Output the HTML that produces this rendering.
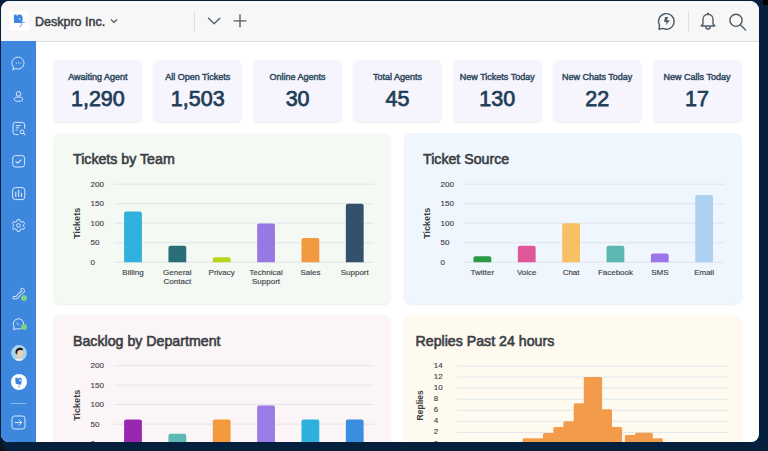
<!DOCTYPE html><html><head><meta charset="utf-8"><style>
html,body{margin:0;padding:0;width:768px;height:451px;overflow:hidden;background:#05203d;font-family:"Liberation Sans", sans-serif;}
.win{position:absolute;left:0;top:0;width:768px;height:451px;background:#fff;clip-path:inset(1px 9px 9px 1px round 8.5px 9px 7.5px 8px);}
.a{position:absolute;}
.stat{position:absolute;top:60px;width:89px;height:62px;background:#f6f4fd;border-radius:6px;box-shadow:0 1px 1.5px rgba(0,0,0,0.08);}
.stat .l{position:absolute;left:0;right:0;top:11.6px;text-align:center;font-size:9px;font-weight:400;color:#2f4a5e;-webkit-text-stroke:0.45px #2f4a5e;white-space:nowrap;}
.stat .n{position:absolute;left:0;right:0;top:26.7px;text-align:center;font-size:21.5px;font-weight:400;color:#1f3e58;-webkit-text-stroke:0.75px #1f3e58;white-space:nowrap;}
.card{position:absolute;border-radius:7px;box-shadow:0 1px 2px rgba(0,0,0,0.07);}
.title{position:absolute;font-size:14.2px;font-weight:400;color:#3b3e44;-webkit-text-stroke:0.6px #3b3e44;white-space:nowrap;}
svg text{font-family:"Liberation Sans", sans-serif;}
svg text.t{stroke:#45484d;stroke-width:0.15px;}
</style></head><body>
<div class="a" style="left:763px;top:0;width:5px;height:4.5px;background:#000;"></div>
<svg class="a" style="left:0;top:440px" width="8" height="11"><path d="M0 0 L1.5 2 L6 11 H0 Z" fill="#111418"/></svg>
<div class="win">

<div class="a" style="left:0;top:0;width:768px;height:42px;background:#f7f7f8;border-bottom:1px solid #dcdfe2;box-sizing:border-box;"></div>
<div class="a" style="left:9px;top:11px;width:19.5px;height:19.5px;background:#fff;border-radius:3px;"></div>
<svg class="a" style="left:0;top:0" width="40" height="40" viewBox="0 0 40 40">
<path d="M13.9 15.4 A0.8 0.8 0 0 1 14.7 14.6 H16.6 V15.6 H18 V14.6 H19.6 A3 3 0 0 1 22.6 17.6 V19.9 A3 3 0 0 1 19.6 22.9 H15.4 A1.5 1.5 0 0 1 13.9 21.4 Z" fill="#3d88de"/>
<circle cx="19.7" cy="18.8" r="0.9" fill="#b9d6f5"/>
<path d="M21.3 22.4 V24.8 C21.3 25.9 20.4 26.8 19.3 26.8 M21.3 22.5 H24.8" stroke="#3d88de" stroke-width="0.8" fill="none"/>
</svg>
<div class="a" style="left:35px;top:14.6px;font-size:12.5px;font-weight:400;color:#3a3e45;-webkit-text-stroke:0.5px #3a3e45;white-space:nowrap;">Deskpro Inc.</div>
<svg class="a" style="left:109px;top:17px" width="10" height="8" viewBox="0 0 10 8"><path d="M2 2.5 L5 5.5 L8 2.5" stroke="#4b5563" stroke-width="1.2" fill="none"/></svg>
<div class="a" style="left:194px;top:11px;width:1px;height:21px;background:#dcdee1;"></div>
<svg class="a" style="left:0;top:0" width="768" height="42" viewBox="0 0 768 42">
<path d="M208.6 18.2 L214.2 23.8 L219.8 18.2" stroke="#55606b" stroke-width="1.4" fill="none" stroke-linecap="round" stroke-linejoin="round"/>
<path d="M240 15 V26.8 M234.1 20.9 H245.9" stroke="#55606b" stroke-width="1.4" fill="none" stroke-linecap="round"/>
<path d="M659.6 25.4 A7.8 7.8 0 1 1 662.8 28.4 L659 29.2 Z" stroke="#4f5d69" stroke-width="1.4" fill="none" stroke-linejoin="round"/>
<path d="M665 17 H668.2 L666.9 20.2 H670 L665.6 25.6 L666.6 21.9 H664 Z" fill="#4f5d69"/>
<rect x="688" y="11" width="1" height="20.5" fill="#dfe1e4"/>
<path d="M708 14.3 C705 14.3 703 16.6 703 19.6 V24 L701.2 26 H714.8 L713 24 V19.6 C713 16.6 711 14.3 708 14.3 Z" stroke="#4f5d69" stroke-width="1.4" fill="none" stroke-linejoin="round"/>
<path d="M705.8 26.4 A2.2 2.6 0 0 0 710.2 26.4" stroke="#4f5d69" stroke-width="1.4" fill="none"/>
<path d="M708 13.2 V14.6" stroke="#4f5d69" stroke-width="1.6" stroke-linecap="round"/>
<circle cx="736" cy="20.3" r="6.1" stroke="#4f5d69" stroke-width="1.4" fill="none"/>
<path d="M740.6 25 L745.6 30" stroke="#4f5d69" stroke-width="1.4" stroke-linecap="round"/>
</svg>
<div class="a" style="left:0;top:41px;width:36px;height:410px;background:#3d88de;"></div>
<svg class="a" style="left:10px;top:55.0px" width="17" height="17" viewBox="0 0 17 17"><path d="M3.6 12.2 L2.6 14.8 L5.6 13.6 A6 6 0 1 0 3.6 12.2 Z" stroke="#dce9f8" stroke-width="1" fill="none" stroke-linejoin="round"/><circle cx="6.4" cy="8" r=".6" fill="#dce9f8"/><circle cx="8.5" cy="8" r=".6" fill="#dce9f8"/><circle cx="10.6" cy="8" r=".6" fill="#dce9f8"/></svg>
<svg class="a" style="left:10px;top:87.5px" width="17" height="17" viewBox="0 0 17 17"><circle cx="8.5" cy="5.9" r="2.3" stroke="#dce9f8" stroke-width="1" fill="none"/><ellipse cx="8.5" cy="11.2" rx="4.2" ry="2.2" stroke="#dce9f8" stroke-width="1" fill="none"/></svg>
<svg class="a" style="left:10px;top:120.19999999999999px" width="17" height="17" viewBox="0 0 17 17"><path d="M14.6 8.6 V4.8 A2.4 2.4 0 0 0 12.2 2.4 H5.4 A2.4 2.4 0 0 0 3 4.8 V12.2 A2.4 2.4 0 0 0 5.4 14.6 H8.6" stroke="#dce9f8" stroke-width="1" fill="none"/><path d="M5.8 5.6 H10.6 M5.8 7.8 H9 M5.8 10 H7.4" stroke="#dce9f8" stroke-width="1"/><circle cx="12" cy="11.8" r="1.9" stroke="#dce9f8" stroke-width="1" fill="none"/><path d="M13.4 13.2 L14.8 14.6" stroke="#dce9f8" stroke-width="1.1" stroke-linecap="round"/></svg>
<svg class="a" style="left:10px;top:152.5px" width="17" height="17" viewBox="0 0 17 17"><rect x="2.8" y="2.6" width="11.8" height="11.4" rx="2.6" stroke="#dce9f8" stroke-width="1" fill="none"/><path d="M5.9 8.6 L7.7 10.2 L11.1 6.8" stroke="#dce9f8" stroke-width="1.2" fill="none" stroke-linecap="round" stroke-linejoin="round"/></svg>
<svg class="a" style="left:10px;top:184.8px" width="17" height="17" viewBox="0 0 17 17"><rect x="2.6" y="2.6" width="12.2" height="12" rx="2.8" stroke="#dce9f8" stroke-width="1" fill="none"/><path d="M5.8 7.4 V11.4 M8.7 5.4 V11.4 M11.5 8.4 V11.4" stroke="#dce9f8" stroke-width="1.1" stroke-linecap="round"/></svg>
<svg class="a" style="left:10px;top:216.8px" width="17" height="17" viewBox="0 0 17 17"><path d="M7.3 2.6 H9.7 L10.2 4.3 L11.7 5.1 L13.4 4.6 L14.6 6.7 L13.3 7.9 V9.1 L14.6 10.3 L13.4 12.4 L11.7 11.9 L10.2 12.7 L9.7 14.4 H7.3 L6.8 12.7 L5.3 11.9 L3.6 12.4 L2.4 10.3 L3.7 9.1 V7.9 L2.4 6.7 L3.6 4.6 L5.3 5.1 L6.8 4.3 Z" stroke="#dce9f8" stroke-width="1" fill="none" stroke-linejoin="round"/><circle cx="8.5" cy="8.5" r="1.9" stroke="#dce9f8" stroke-width="1" fill="none"/></svg>
<svg class="a" style="left:10px;top:286.0px" width="17" height="17" viewBox="0 0 17 17"><path d="M4.2 11.6 C5.6 12.2 7.4 11.2 8.4 9.6 C9.4 8 10.6 6.6 12.4 6.2 C13.6 5.6 13.4 3.6 12.2 3.4" stroke="#dce9f8" stroke-width="3.4" fill="none" stroke-linecap="round"/><path d="M4.2 11.6 C5.6 12.2 7.4 11.2 8.4 9.6 C9.4 8 10.6 6.6 12.4 6.2 C13.6 5.6 13.4 3.6 12.2 3.4" stroke="#3d88de" stroke-width="1.6" fill="none" stroke-linecap="round"/></svg>
<svg class="a" style="left:10px;top:315.0px" width="17" height="17" viewBox="0 0 17 17"><path d="M6.4 13.7 A5.2 5.2 0 1 0 4 11.6 L3.6 14.6 Z" stroke="#dce9f8" stroke-width="1" fill="none" stroke-linejoin="round"/><path d="M7.2 6.6 V9.4 H9.6" stroke="#9cc3ef" stroke-width="0.9" fill="none"/></svg>
<div class="a" style="left:20.7px;top:295.2px;width:6px;height:6px;border-radius:50%;background:#80d083;"></div>
<div class="a" style="left:20.7px;top:324.3px;width:6px;height:6px;border-radius:50%;background:#80d083;"></div>
<svg class="a" style="left:10.9px;top:344.9px" width="16" height="16" viewBox="0 0 16 16">
<defs><clipPath id="av"><circle cx="8" cy="8" r="7.9"/></clipPath></defs>
<circle cx="8" cy="8" r="7.9" fill="#a6d6ec"/>
<g clip-path="url(#av)">
<path d="M3 16.5 C4 12.5 12 12 14 16.5 Z" fill="#eef0f0"/>
<path d="M7 12 L9.6 12.2 L10 14 L7.4 14.2 Z" fill="#e6c2a6"/>
<ellipse cx="9" cy="8.4" rx="3.2" ry="3.9" fill="#efcdb2"/>
<path d="M4.6 8.6 C3.8 4.6 6.6 2.4 9.4 2.8 C11.4 3 12.4 4.4 12 5.6 C10.4 4.8 8 5 6.6 6 C6.2 7 6 8 6.4 9.4 Z" fill="#1f1a18"/>
</g>
</svg>
<svg class="a" style="left:10.5px;top:374.4px" width="16" height="16" viewBox="0 0 16 16">
<circle cx="8" cy="8" r="8" fill="#fff"/>
<path d="M4.3 3.8 h2.6 v0.8 h1.2 v-0.8 h1.5 a1 1 0 0 1 1 1 v3.4 a2.1 2.1 0 0 1 -2.1 2.1 h-2.1 a2 2 0 0 1 -2 -2 z" fill="#3d88de"/>
<circle cx="9" cy="6.4" r=".8" fill="#fff"/>
<path d="M8.4 9.8 v1.9 a1.3 1.3 0 0 1 -1.3 1.3 M8.4 10.1 h2.4" stroke="#3d88de" stroke-width="0.7" fill="none"/>
</svg>
<div class="a" style="left:11px;top:402.5px;width:15px;height:1px;background:#8fbbed;"></div>
<svg class="a" style="left:10px;top:413.5px" width="17" height="17" viewBox="0 0 17 17">
<rect x="2" y="2" width="13" height="13" rx="2.6" stroke="#dce9f8" stroke-width="1" fill="none"/>
<path d="M5.2 8.5 H11.6 M9 5.9 L11.6 8.5 L9 11.1" stroke="#dce9f8" stroke-width="1" fill="none" stroke-linecap="round" stroke-linejoin="round"/>
</svg>
<div class="stat" style="left:53.4px"><div class="l">Awaiting Agent</div><div class="n">1,290</div></div>
<div class="stat" style="left:153.25px"><div class="l">All Open Tickets</div><div class="n">1,503</div></div>
<div class="stat" style="left:253.1px"><div class="l">Online Agents</div><div class="n">30</div></div>
<div class="stat" style="left:352.94999999999993px"><div class="l">Total Agents</div><div class="n">45</div></div>
<div class="stat" style="left:452.79999999999995px"><div class="l">New Tickets Today</div><div class="n">130</div></div>
<div class="stat" style="left:552.65px"><div class="l">New Chats Today</div><div class="n">22</div></div>
<div class="stat" style="left:652.4999999999999px"><div class="l">New Calls Today</div><div class="n">17</div></div>
<div class="card" style="left:53.4px;top:133.4px;width:338.1px;height:170.2px;background:#f4f9f4;"></div>
<div class="card" style="left:403.5px;top:133.4px;width:338.1px;height:170.2px;background:#f0f6fd;"></div>
<div class="card" style="left:53.4px;top:315.2px;width:338.1px;height:170.2px;background:#fcf5f7;"></div>
<div class="card" style="left:403.5px;top:315.2px;width:338.1px;height:170.2px;background:#fefaf0;"></div>
<div class="title" style="left:73px;top:151.3px">Tickets by Team</div>
<div class="title" style="left:423px;top:151.3px">Ticket Source</div>
<div class="title" style="left:73px;top:333.3px">Backlog by Department</div>
<div class="title" style="left:415.5px;top:333.3px">Replies Past 24 hours</div>
<svg class="a" style="left:0;top:0" width="768" height="451" viewBox="0 0 768 451"><line x1="114" y1="262.2" x2="374" y2="262.2" stroke="#dfe5ea" stroke-width="1"/><text x="90.6" y="264.59999999999997" class="t" font-size="8" fill="#3f4246">0</text><line x1="114" y1="242.7" x2="374" y2="242.7" stroke="#dfe5ea" stroke-width="1"/><text x="90.6" y="245.1" class="t" font-size="8" fill="#3f4246">50</text><line x1="114" y1="223.2" x2="374" y2="223.2" stroke="#dfe5ea" stroke-width="1"/><text x="90.6" y="225.6" class="t" font-size="8" fill="#3f4246">100</text><line x1="114" y1="203.7" x2="374" y2="203.7" stroke="#dfe5ea" stroke-width="1"/><text x="90.6" y="206.1" class="t" font-size="8" fill="#3f4246">150</text><line x1="114" y1="184.2" x2="374" y2="184.2" stroke="#dfe5ea" stroke-width="1"/><text x="90.6" y="186.6" class="t" font-size="8" fill="#3f4246">200</text><text transform="translate(79.6,223.3) rotate(-90)" font-size="9" font-weight="700" fill="#3a3d42" text-anchor="middle">Tickets</text><path d="M124.1 262.2 V213.5 Q124.1 211.5 126.1 211.5 H139.9 Q141.9 211.5 141.9 213.5 V262.2 Z" fill="#30b0dc"/><path d="M168.45 262.2 V247.82 Q168.45 245.82 170.45 245.82 H184.25 Q186.25 245.82 186.25 247.82 V262.2 Z" fill="#2b6e78"/><path d="M212.79999999999998 262.2 V259.13 Q212.79999999999998 257.13 214.79999999999998 257.13 H228.6 Q230.6 257.13 230.6 259.13 V262.2 Z" fill="#b8d51a"/><path d="M257.15000000000003 262.2 V225.58999999999997 Q257.15000000000003 223.58999999999997 259.15000000000003 223.58999999999997 H272.95 Q274.95 223.58999999999997 274.95 225.58999999999997 V262.2 Z" fill="#9a78e4"/><path d="M301.5 262.2 V240.01999999999998 Q301.5 238.01999999999998 303.5 238.01999999999998 H317.29999999999995 Q319.29999999999995 238.01999999999998 319.29999999999995 240.01999999999998 V262.2 Z" fill="#f39a40"/><path d="M345.85 262.2 V205.7 Q345.85 203.7 347.85 203.7 H361.65 Q363.65 203.7 363.65 205.7 V262.2 Z" fill="#33516a"/><text x="133.0" y="274.5" class="t" font-size="8" fill="#3f4246" text-anchor="middle">Billing</text><text x="177.35" y="274.5" class="t" font-size="8" fill="#3f4246" text-anchor="middle">General</text><text x="177.35" y="283.5" class="t" font-size="8" fill="#3f4246" text-anchor="middle">Contact</text><text x="221.7" y="274.5" class="t" font-size="8" fill="#3f4246" text-anchor="middle">Privacy</text><text x="266.05" y="274.5" class="t" font-size="8" fill="#3f4246" text-anchor="middle">Technical</text><text x="266.05" y="283.5" class="t" font-size="8" fill="#3f4246" text-anchor="middle">Support</text><text x="310.4" y="274.5" class="t" font-size="8" fill="#3f4246" text-anchor="middle">Sales</text><text x="354.75" y="274.5" class="t" font-size="8" fill="#3f4246" text-anchor="middle">Support</text><line x1="464" y1="262.2" x2="724" y2="262.2" stroke="#dfe5ea" stroke-width="1"/><text x="440.6" y="264.59999999999997" class="t" font-size="8" fill="#3f4246">0</text><line x1="464" y1="242.7" x2="724" y2="242.7" stroke="#dfe5ea" stroke-width="1"/><text x="440.6" y="245.1" class="t" font-size="8" fill="#3f4246">50</text><line x1="464" y1="223.2" x2="724" y2="223.2" stroke="#dfe5ea" stroke-width="1"/><text x="440.6" y="225.6" class="t" font-size="8" fill="#3f4246">100</text><line x1="464" y1="203.7" x2="724" y2="203.7" stroke="#dfe5ea" stroke-width="1"/><text x="440.6" y="206.1" class="t" font-size="8" fill="#3f4246">150</text><line x1="464" y1="184.2" x2="724" y2="184.2" stroke="#dfe5ea" stroke-width="1"/><text x="440.6" y="186.6" class="t" font-size="8" fill="#3f4246">200</text><text transform="translate(429.6,223.3) rotate(-90)" font-size="9" font-weight="700" fill="#3a3d42" text-anchor="middle">Tickets</text><path d="M473.5 262.2 V258.34999999999997 Q473.5 256.34999999999997 475.5 256.34999999999997 H489.29999999999995 Q491.29999999999995 256.34999999999997 491.29999999999995 258.34999999999997 V262.2 Z" fill="#2a9a45"/><path d="M517.85 262.2 V247.82 Q517.85 245.82 519.85 245.82 H533.65 Q535.65 245.82 535.65 247.82 V262.2 Z" fill="#e0579a"/><path d="M562.2 262.2 V225.2 Q562.2 223.2 564.2 223.2 H578.0 Q580.0 223.2 580.0 225.2 V262.2 Z" fill="#f8c064"/><path d="M606.5500000000001 262.2 V247.82 Q606.5500000000001 245.82 608.5500000000001 245.82 H622.35 Q624.35 245.82 624.35 247.82 V262.2 Z" fill="#5bb7b0"/><path d="M650.9 262.2 V255.61999999999998 Q650.9 253.61999999999998 652.9 253.61999999999998 H666.6999999999999 Q668.6999999999999 253.61999999999998 668.6999999999999 255.61999999999998 V262.2 Z" fill="#9a77e8"/><path d="M695.25 262.2 V197.12 Q695.25 195.12 697.25 195.12 H711.05 Q713.05 195.12 713.05 197.12 V262.2 Z" fill="#acd0f0"/><text x="482.4" y="274.5" class="t" font-size="8" fill="#3f4246" text-anchor="middle">Twitter</text><text x="526.75" y="274.5" class="t" font-size="8" fill="#3f4246" text-anchor="middle">Voice</text><text x="571.1" y="274.5" class="t" font-size="8" fill="#3f4246" text-anchor="middle">Chat</text><text x="615.45" y="274.5" class="t" font-size="8" fill="#3f4246" text-anchor="middle">Facebook</text><text x="659.8" y="274.5" class="t" font-size="8" fill="#3f4246" text-anchor="middle">SMS</text><text x="704.15" y="274.5" class="t" font-size="8" fill="#3f4246" text-anchor="middle">Email</text><line x1="114" y1="443.59999999999997" x2="374" y2="443.59999999999997" stroke="#dfe5ea" stroke-width="1"/><text x="90.6" y="445.99999999999994" class="t" font-size="8" fill="#3f4246">0</text><line x1="114" y1="424.09999999999997" x2="374" y2="424.09999999999997" stroke="#dfe5ea" stroke-width="1"/><text x="90.6" y="426.49999999999994" class="t" font-size="8" fill="#3f4246">50</text><line x1="114" y1="404.59999999999997" x2="374" y2="404.59999999999997" stroke="#dfe5ea" stroke-width="1"/><text x="90.6" y="406.99999999999994" class="t" font-size="8" fill="#3f4246">100</text><line x1="114" y1="385.09999999999997" x2="374" y2="385.09999999999997" stroke="#dfe5ea" stroke-width="1"/><text x="90.6" y="387.49999999999994" class="t" font-size="8" fill="#3f4246">150</text><line x1="114" y1="365.59999999999997" x2="374" y2="365.59999999999997" stroke="#dfe5ea" stroke-width="1"/><text x="90.6" y="367.99999999999994" class="t" font-size="8" fill="#3f4246">200</text><text transform="translate(79.6,405.3) rotate(-90)" font-size="9" font-weight="700" fill="#3a3d42" text-anchor="middle">Tickets</text><path d="M124.1 443.59999999999997 V421.41999999999996 Q124.1 419.41999999999996 126.1 419.41999999999996 H139.9 Q141.9 419.41999999999996 141.9 421.41999999999996 V443.59999999999997 Z" fill="#9a27b0"/><path d="M168.45 443.59999999999997 V435.84999999999997 Q168.45 433.84999999999997 170.45 433.84999999999997 H184.25 Q186.25 433.84999999999997 186.25 435.84999999999997 V443.59999999999997 Z" fill="#5cb8b2"/><path d="M212.79999999999998 443.59999999999997 V421.41999999999996 Q212.79999999999998 419.41999999999996 214.79999999999998 419.41999999999996 H228.6 Q230.6 419.41999999999996 230.6 421.41999999999996 V443.59999999999997 Z" fill="#f39a3d"/><path d="M257.15000000000003 443.59999999999997 V407.38 Q257.15000000000003 405.38 259.15000000000003 405.38 H272.95 Q274.95 405.38 274.95 407.38 V443.59999999999997 Z" fill="#9b7be6"/><path d="M301.5 443.59999999999997 V421.41999999999996 Q301.5 419.41999999999996 303.5 419.41999999999996 H317.29999999999995 Q319.29999999999995 419.41999999999996 319.29999999999995 421.41999999999996 V443.59999999999997 Z" fill="#2db0dd"/><path d="M345.85 443.59999999999997 V421.41999999999996 Q345.85 419.41999999999996 347.85 419.41999999999996 H361.65 Q363.65 419.41999999999996 363.65 421.41999999999996 V443.59999999999997 Z" fill="#3a8ee0"/><text x="133.0" y="456.5" class="t" font-size="8" fill="#3f4246" text-anchor="middle"></text><text x="177.35" y="456.5" class="t" font-size="8" fill="#3f4246" text-anchor="middle"></text><text x="221.7" y="456.5" class="t" font-size="8" fill="#3f4246" text-anchor="middle"></text><text x="266.05" y="456.5" class="t" font-size="8" fill="#3f4246" text-anchor="middle"></text><text x="310.4" y="456.5" class="t" font-size="8" fill="#3f4246" text-anchor="middle"></text><text x="354.75" y="456.5" class="t" font-size="8" fill="#3f4246" text-anchor="middle"></text><line x1="457" y1="443.5" x2="728" y2="443.5" stroke="#dfe5ea" stroke-width="1"/><text x="433.8" y="445.5" class="t" font-size="8" fill="#3f4246">0</text><line x1="457" y1="432.434" x2="728" y2="432.434" stroke="#dfe5ea" stroke-width="1"/><text x="433.8" y="434.434" class="t" font-size="8" fill="#3f4246">2</text><line x1="457" y1="421.368" x2="728" y2="421.368" stroke="#dfe5ea" stroke-width="1"/><text x="433.8" y="423.368" class="t" font-size="8" fill="#3f4246">4</text><line x1="457" y1="410.302" x2="728" y2="410.302" stroke="#dfe5ea" stroke-width="1"/><text x="433.8" y="412.302" class="t" font-size="8" fill="#3f4246">6</text><line x1="457" y1="399.236" x2="728" y2="399.236" stroke="#dfe5ea" stroke-width="1"/><text x="433.8" y="401.236" class="t" font-size="8" fill="#3f4246">8</text><line x1="457" y1="388.17" x2="728" y2="388.17" stroke="#dfe5ea" stroke-width="1"/><text x="433.8" y="390.17" class="t" font-size="8" fill="#3f4246">10</text><line x1="457" y1="377.104" x2="728" y2="377.104" stroke="#dfe5ea" stroke-width="1"/><text x="433.8" y="379.104" class="t" font-size="8" fill="#3f4246">12</text><line x1="457" y1="366.038" x2="728" y2="366.038" stroke="#dfe5ea" stroke-width="1"/><text x="433.8" y="368.038" class="t" font-size="8" fill="#3f4246">14</text><text transform="translate(422.6,405.3) rotate(-90)" font-size="8.5" font-weight="700" fill="#3a3d42" text-anchor="middle">Replies</text><path d="M522.6 443.5 V439.8 Q522.6 438.3 524.1 438.3 H542.3 Q543.8 438.3 543.8 439.8 V443.5 Z" fill="#f29c4b"/><path d="M652.0 443.5 V439.8 Q652.0 438.3 653.5 438.3 H661.4 Q662.9 438.3 662.9 439.8 V443.5 Z" fill="#f29c4b"/><path d="M624.9 443.5 V436.6 Q624.9 435.1 626.4 435.1 H634.3 Q635.8 435.1 635.8 436.6 V443.5 Z" fill="#f29c4b"/><path d="M543.0 443.5 V434.5 Q543.0 433 544.5 433 H552.6 Q554.1 433 554.1 434.5 V443.5 Z" fill="#f29c4b"/><path d="M635.0 443.5 V434.3 Q635.0 432.8 636.5 432.8 H651.3 Q652.8 432.8 652.8 434.3 V443.5 Z" fill="#f29c4b"/><path d="M553.3000000000001 443.5 V428.6 Q553.3000000000001 427.1 554.8000000000001 427.1 H562.6999999999999 Q564.1999999999999 427.1 564.1999999999999 428.6 V443.5 Z" fill="#f29c4b"/><path d="M611.2 443.5 V428.6 Q611.2 427.1 612.7 427.1 H620.6 Q622.1 427.1 622.1 428.6 V443.5 Z" fill="#f29c4b"/><path d="M563.4 443.5 V422.8 Q563.4 421.3 564.9 421.3 H573.0 Q574.5 421.3 574.5 422.8 V443.5 Z" fill="#f29c4b"/><path d="M601.3000000000001 443.5 V410.8 Q601.3000000000001 409.3 602.8000000000001 409.3 H610.5 Q612.0 409.3 612.0 410.8 V443.5 Z" fill="#f29c4b"/><path d="M573.7 443.5 V404.8 Q573.7 403.3 575.2 403.3 H583.1 Q584.6 403.3 584.6 404.8 V443.5 Z" fill="#f29c4b"/><path d="M583.8000000000001 443.5 V378.4 Q583.8000000000001 376.9 585.3000000000001 376.9 H600.6 Q602.1 376.9 602.1 378.4 V443.5 Z" fill="#f29c4b"/></svg>
</div></body></html>
